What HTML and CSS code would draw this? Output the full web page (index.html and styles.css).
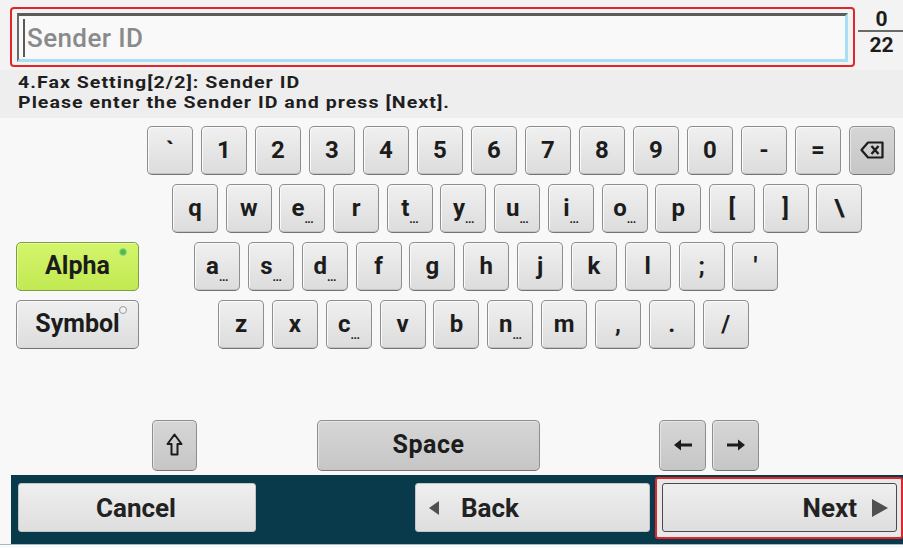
FILE: index.html
```html
<!DOCTYPE html>
<html lang="en">
<head>
<meta charset="utf-8">
<title>Sender ID</title>
<link rel="stylesheet" href="styles.css">
</head>
<body>
<div class="screen">
  <header class="top">
    <div class="field-frame">
      <div class="field"><span class="caret"></span><span class="placeholder">Sender ID</span></div>
    </div>
    <div class="counter"><span class="num">0</span><span class="den">22</span></div>
  </header>
  <div class="info">
    <p>4.Fax Setting[2/2]: Sender ID<br>Please enter the Sender ID and press [Next].</p>
  </div>
  <main class="keyboard">
    <div class="row row1">
      <div class="key">`</div>
      <div class="key">1</div>
      <div class="key">2</div>
      <div class="key">3</div>
      <div class="key">4</div>
      <div class="key">5</div>
      <div class="key">6</div>
      <div class="key">7</div>
      <div class="key">8</div>
      <div class="key">9</div>
      <div class="key">0</div>
      <div class="key">-</div>
      <div class="key">=</div>
      <div class="key dark"><svg class="bs" viewBox="0 0 24 18" width="24" height="18"><path d="M8 1.5H22.5V16.5H8L1.5 9Z" fill="none" stroke="#1c1c1c" stroke-width="2.2" stroke-linejoin="round"/><path d="M11.5 5L18.5 13M18.5 5L11.5 13" stroke="#1c1c1c" stroke-width="2.4"/></svg></div>
    </div>
    <div class="row row2">
      <div class="key">q</div>
      <div class="key">w</div>
      <div class="key">e<span class="more">...</span></div>
      <div class="key">r</div>
      <div class="key">t<span class="more">...</span></div>
      <div class="key">y<span class="more">...</span></div>
      <div class="key">u<span class="more">...</span></div>
      <div class="key">i<span class="more">...</span></div>
      <div class="key">o<span class="more">...</span></div>
      <div class="key">p</div>
      <div class="key">[</div>
      <div class="key">]</div>
      <div class="key">\</div>
    </div>
    <div class="row row3">
      <div class="mode alpha">Alpha<span class="lamp on"></span></div>
      <div class="keys">
        <div class="key">a<span class="more">...</span></div>
        <div class="key">s<span class="more">...</span></div>
        <div class="key">d<span class="more">...</span></div>
        <div class="key">f</div>
        <div class="key">g</div>
        <div class="key">h</div>
        <div class="key">j</div>
        <div class="key">k</div>
        <div class="key">l</div>
        <div class="key">;</div>
        <div class="key">'</div>
      </div>
    </div>
    <div class="row row4">
      <div class="mode symbol">Symbol<span class="lamp"></span></div>
      <div class="keys">
        <div class="key">z</div>
        <div class="key">x</div>
        <div class="key">c<span class="more">...</span></div>
        <div class="key">v</div>
        <div class="key">b</div>
        <div class="key">n<span class="more">...</span></div>
        <div class="key">m</div>
        <div class="key">,</div>
        <div class="key">.</div>
        <div class="key">/</div>
      </div>
    </div>
    <div class="row row5">
      <div class="key dark shift"><svg viewBox="0 0 17 23" width="17" height="23"><path d="M8.5 1.5L15.5 11H11.5V21.5H5.5V11H1.5Z" fill="none" stroke="#1c1c1c" stroke-width="2" stroke-linejoin="round"/></svg></div>
      <div class="key dark space">Space</div>
      <div class="key dark arrow left"><svg viewBox="0 0 20 14" width="20" height="14"><path d="M1 7L8 1.5V5.6H19V8.4H8V12.5Z" fill="#1c1c1c"/></svg></div>
      <div class="key dark arrow right"><svg viewBox="0 0 20 14" width="20" height="14"><path d="M19 7L12 1.5V5.6H1V8.4H12V12.5Z" fill="#1c1c1c"/></svg></div>
    </div>
  </main>
  <footer class="bar">
    <div class="nav cancel">Cancel</div>
    <div class="nav back"><svg viewBox="0 0 12 16" width="12" height="16"><path d="M1 8L11 1V15Z" fill="#505050"/></svg><span>Back</span></div>
    <div class="next-frame">
      <div class="nav next"><span>Next</span><svg viewBox="0 0 18 20" width="18" height="20"><path d="M17 10L1 1V19Z" fill="#505050"/></svg></div>
    </div>
  </footer>
  <div class="bottom-strip"></div>
</div>
</body>
</html>
```
FILE: styles.css
```css
* {
  box-sizing: border-box;
  margin: 0;
  padding: 0;
}

body {
  margin: 0;
  background: #fafafa;
  font-family: Roboto, "Liberation Sans", sans-serif;
  color: #1c1c1c;
}

.screen {
  width: 903px;
  height: 548px;
  display: flex;
  flex-direction: column;
  background: #f8f8f8;
  overflow: hidden;
}

/* ---------- top field ---------- */
.top {
  height: 70px;
  display: flex;
  align-items: flex-start;
  background: #f3f3f3;
}

.field-frame {
  margin: 7px 0 0 10px;
  width: 845px;
  height: 60px;
  border: 2px solid #e0262b;
  border-radius: 4px;
  padding: 4px 5px 3px 5px;
}

.field {
  height: 100%;
  background: #f9f9f9;
  border-top: 3px solid #5c5c5c;
  border-left: 2px solid #6a6a6a;
  border-right: 3px solid #a8dff2;
  border-bottom: 3px solid #a8dff2;
  display: flex;
  align-items: center;
  padding-left: 4px;
}

.caret {
  width: 2px;
  height: 38px;
  background: #5a5a5a;
  margin-right: 2px;
}

.placeholder {
  font-size: 26px;
  font-weight: 500;
  color: #8a8a8a;
  letter-spacing: 0.4px;
}

.counter {
  margin-left: 3px;
  width: 45px;
  padding-top: 8px;
  display: flex;
  flex-direction: column;
  align-items: stretch;
  font-weight: 700;
  font-size: 21px;
  line-height: 22px;
  text-align: center;
}

.counter .num {
  border-bottom: 2px solid #6a6a6a;
  padding-left: 2px;
}

.counter .den {
  padding-left: 2px;
  padding-top: 2px;
}

/* ---------- info ---------- */
.info {
  height: 48px;
  padding: 2px 0 0 18px;
  background: #eeeeee;
}

.info p {
  font-size: 17px;
  font-weight: 700;
  line-height: 20px;
  letter-spacing: 0.9px;
  color: #1e1e1e;
  transform: scaleX(1.15);
  transform-origin: left top;
}

/* ---------- keyboard ---------- */
.keyboard {
  height: 357px;
  padding-top: 8px;
  display: flex;
  flex-direction: column;
  gap: 9px;
  background: #f8f8f8;
}

.row {
  display: flex;
  align-items: flex-start;
}

.row1 {
  padding-left: 147px;
  gap: 8px;
}

.row2 {
  padding-left: 172px;
  gap: 7.7px;
}

.row3,
.row4 {
  padding-left: 16px;
}

.row3 .keys,
.row4 .keys {
  display: flex;
  gap: 7.85px;
}

.row3 .keys {
  margin-left: 55px;
}

.row4 .keys {
  margin-left: 79px;
}

.row5 {
  margin-top: 62px;
  padding-left: 152px;
}

.key {
  width: 46px;
  height: 49px;
  border: 1px solid #8e8e8e;
  border-bottom-color: #747474;
  border-radius: 5px;
  background: linear-gradient(#f0f0f0, #dcdcdc);
  box-shadow: inset 1px 1px 0 #fafafa, inset 0 -1px 0 #c4c4c4;
  display: flex;
  align-items: center;
  justify-content: center;
  font-size: 24px;
  font-weight: 700;
  color: #1c1c1c;
  padding-bottom: 2px;
}

.key .more {
  font-size: 12px;
  letter-spacing: -0.5px;
  align-self: flex-end;
  margin-bottom: 5px;
  line-height: 12px;
}

.key.dark {
  background: linear-gradient(#d6d6d6, #c6c6c6);
  box-shadow: inset 1px 1px 0 #e6e6e6;
}

.shift {
  width: 45px;
  height: 51px;
}

.space {
  width: 223px;
  height: 51px;
  margin-left: 120px;
  font-size: 25px;
  letter-spacing: 0.5px;
}

.arrow {
  width: 47px;
  height: 51px;
}

.arrow.left {
  margin-left: 119px;
}

.arrow.right {
  margin-left: 6px;
}

.mode {
  position: relative;
  width: 123px;
  height: 49px;
  border: 1px solid #8a8a8a;
  border-bottom-color: #727272;
  border-radius: 5px;
  display: flex;
  align-items: center;
  justify-content: center;
  font-size: 25px;
  font-weight: 700;
  padding-bottom: 2px;
}

.alpha {
  background: linear-gradient(#d3f56c, #c2e952);
  border-color: #7f9c48;
  box-shadow: inset 1px 1px 0 #e4fb9c;
}

.symbol {
  background: linear-gradient(#f0f0f0, #dcdcdc);
  box-shadow: inset 1px 1px 0 #fafafa;
}

.lamp {
  position: absolute;
  top: 5px;
  right: 11px;
  width: 8px;
  height: 8px;
  border-radius: 50%;
  border: 1.5px solid #9a9a9a;
  background: #f2f2f2;
}

.lamp.on {
  border-color: #9fd98a;
  background: #4dbd48;
}

/* ---------- bottom bar ---------- */
.bar {
  margin-left: 11px;
  height: 69px;
  background: #083a4b;
  display: flex;
  align-items: flex-start;
}

.nav {
  height: 49px;
  width: 235px;
  border: 1px solid #c4c4c4;
  border-radius: 3px;
  background: linear-gradient(#efefef, #dedede);
  display: flex;
  align-items: center;
  font-size: 26px;
  font-weight: 700;
  color: #222;
}

.cancel {
  margin: 8px 0 0 7px;
  width: 238px;
  justify-content: center;
  padding-right: 2px;
}

.back {
  margin: 8px 0 0 159px;
  padding-left: 12px;
  gap: 21px;
}

.next-frame {
  margin: 2px 0 0 5px;
  width: 248px;
  height: 62px;
  border: 2px solid #e0262b;
  border-radius: 3px;
  background: #e9e9e9;
  padding: 4px 0 0 5px;
}

.next {
  border: 1px solid #4a4a4a;
  justify-content: flex-end;
  padding-right: 7px;
  gap: 14px;
}

.bottom-strip {
  height: 4px;
  border-top: 1px solid #a3b9c1;
  background: #fafafa;
}
```
